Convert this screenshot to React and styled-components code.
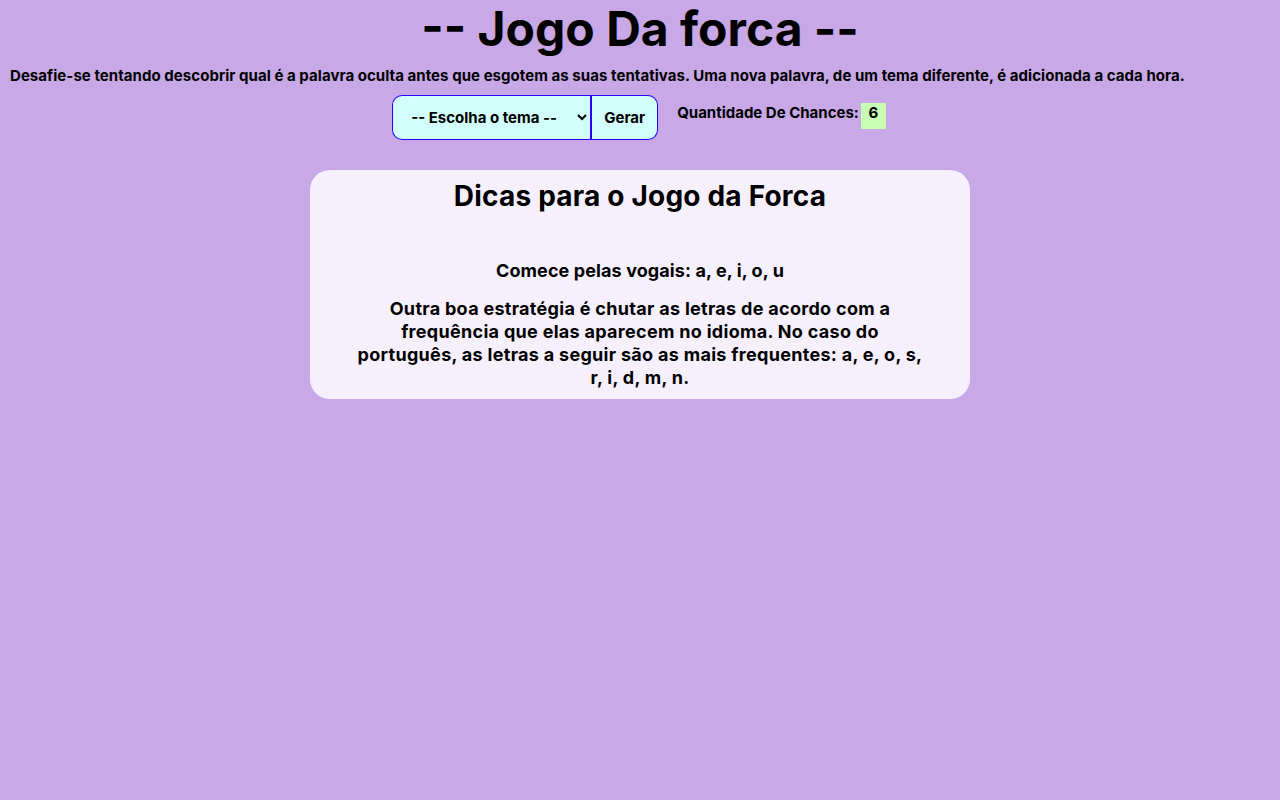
import styled, { createGlobalStyle } from 'styled-components';

const GlobalStyle = createGlobalStyle`
    body{
        margin : 8px;
        background-color : #c8a8e6;
        font-family : Inter, "Noto Sans", sans-serif;
        font-weight : 700;
        color : #000;
    }
`;

export default function App() {
    return (
        <>
            <GlobalStyle />
            <Header>
                <Title>-- Jogo Da forca --</Title>
                <Subtitle>
                    Desafie-se tentando descobrir qual é a palavra oculta antes que esgotem as suas tentativas. Uma nova palavra, de um tema diferente, é adicionada a cada hora.
                </Subtitle>
            </Header>
            <Controls>
                <ThemeForm>
                    <ThemeSelect defaultValue="">
                        <option value="">-- Escolha o tema --</option>
                        <option value="animais">Animais</option>
                        <option value="frutas">Frutas</option>
                        <option value="paises">Países</option>
                    </ThemeSelect>
                    <GenerateBtn type="button">Gerar</GenerateBtn>
                </ThemeForm>
                <Chances>
                    Quantidade De Chances:
                    <ChanceCount>6</ChanceCount>
                </Chances>
            </Controls>
            <TipsCard>
                <TipsTitle>Dicas para o Jogo da Forca</TipsTitle>
                <Tip>Comece pelas vogais: a, e, i, o, u</Tip>
                <Tip $loose>
                    Outra boa estratégia é chutar as letras de acordo com a frequência que elas aparecem no idioma. No caso do português, as letras a seguir são as mais frequentes: a, e, o, s, r, i, d, m, n.
                </Tip>
            </TipsCard>
        </>
    );
}

const Header = styled.header`
    text-align : center;
`;

const Title = styled.h1`
    font-size : 48px;
    line-height : 48px;
    margin : -3px 0 0;
`;

const Subtitle = styled.p`
    font-size : 15px;
    margin : 13px 0 0;
    padding-left : 2px;
    text-align : left;
    letter-spacing : 0.05px;
`;

const Controls = styled.div`
    display : flex;
    justify-content : center;
    align-items : center;
    gap : 19px;
    margin-top : 10px;
    padding-right : 2px;
`;

const ThemeForm = styled.div`
    display : flex;
    height : 45px;
`;

const ThemeSelect = styled.select`
    width : 200px;
    height : 45px;
    padding : 0 8px 0 14px;
    background-color : #d2fffc;
    border : 1px solid #2a00ff;
    border-right : 2px solid #2a00ff;
    border-radius : 10px 0 0 10px;
    font-family : inherit;
    font-weight : 700;
    font-size : 15px;
    color : #000;
`;

const GenerateBtn = styled.button`
    width : 66px;
    height : 45px;
    background-color : #d2fffc;
    border : 1px solid #2a00ff;
    border-left : none;
    border-radius : 0 10px 10px 0;
    font-family : inherit;
    font-weight : 700;
    font-size : 15px;
    color : #000;
    cursor : pointer;
`;

const Chances = styled.div`
    display : flex;
    align-items : flex-start;
    gap : 4px;
    font-size : 15px;
    line-height : 18px;
    margin-top : -3px;
`;

const ChanceCount = styled.span`
    display : inline-flex;
    justify-content : center;
    align-items : flex-start;
    box-sizing : border-box;
    width : 25px;
    height : 26px;
    padding-top : 1px;
    margin-top : -1px;
    margin-left : -2px;
    background-color : #c8ffb4;
    font-size : 15px;
`;

const TipsCard = styled.section`
    width : 574px;
    margin : 30px auto 0;
    padding : 10px 43px 10px;
    background-color : #f6effc;
    border-radius : 20px;
    text-align : center;

    & > p:last-child{
        margin-bottom : 0;
    }
`;

const TipsTitle = styled.h2`
    font-size : 28px;
    line-height : 32px;
    margin : 0 0 47px;
    letter-spacing : 0.2px;
`;

const Tip = styled.p`
    font-size : 18px;
    line-height : 23px;
    margin : 0 0 15px;
    letter-spacing : ${(props) => (props.$loose ? '0.3px' : '0.1px')};
`;
